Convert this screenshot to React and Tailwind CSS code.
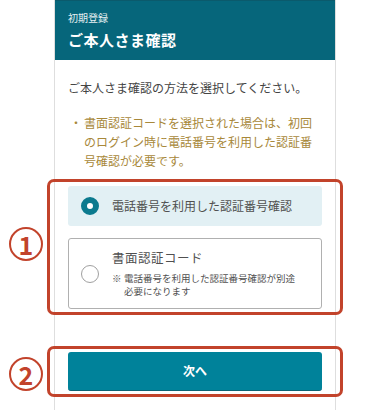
import React from 'react';

const Marker = ({ n, className }) => (
  <div
    className={`absolute left-[-41px] w-[34px] h-[34px] rounded-full border-[2px] border-[#c2432b] flex items-center justify-center text-[#c2432b] text-[25px] font-bold leading-none ${className}`}
  >
    {n}
  </div>
);

const App = () => {
  return (
    <div
      className="w-[390px] h-[410px] bg-white overflow-hidden"
      style={{ fontFamily: '"Noto Sans CJK JP", "Noto Sans", sans-serif' }}
    >
      <div className="ml-[54px] w-[282px] h-[410px] border-x border-[#dedede]">
        {/* header */}
        <div className="h-[60px] bg-[#06667b] px-[13px] pt-[10px] border-t border-[#0b5a6c]">
          <div className="text-[10px] leading-[14px] text-white/90">初期登録</div>
          <div className="mt-[4px] text-[15px] leading-[22px] font-bold text-white tracking-[0.5px]">ご本人さま確認</div>
        </div>

        <div className="px-[13px]">
          <p className="mt-[19px] text-[12px] leading-[18px] text-[#444]">
            ご本人さま確認の方法を選択してください。
          </p>

          <div className="mt-[16px] flex text-[12px] leading-[19px] text-[#a8883a]">
            <span className="w-[16px] shrink-0 text-center">・</span>
            <span>書面認証コードを選択された場合は、初回のログイン時に電話番号を利用した認証番号確認が必要です。</span>
          </div>

          {/* choice */}
          <div className="relative mt-[9px] mx-[-21px] border-[3px] border-[#c2432b] rounded-[7px] px-[18px] pt-[4px] pb-[3px]">
            <Marker n="1" className="top-[45px]" />
            <div className="h-[40px] rounded-[3px] bg-[#e2f0f4] flex items-center pl-[13px] gap-[13px]">
              <span className="w-[18px] h-[18px] rounded-full border-[6px] border-[#0b7a8e] bg-white shrink-0"></span>
              <span className="text-[12px] text-[#505050]">電話番号を利用した認証番号確認</span>
            </div>
            <div className="mt-[12px] h-[71px] rounded-[3px] border border-[#b0b0b0] flex items-center pl-[12px] gap-[13px]">
              <span className="w-[18px] h-[18px] rounded-full border border-[#a0a0a0] bg-white shrink-0"></span>
              <div>
                <div className="text-[12.5px] leading-[18px] text-[#505050] tracking-[0.5px]">書面認証コード</div>
                <div className="mt-[5px] flex text-[9.5px] leading-[13px] text-[#505050]">
                  <span className="w-[12px] shrink-0">※</span>
                  <span>電話番号を利用した認証番号確認が別途<br />必要になります</span>
                </div>
              </div>
            </div>
          </div>

          {/* next */}
          <div className="relative mt-[31px] mx-[-21px] border-[3px] border-[#c2432b] rounded-[7px] px-[18px] pt-[3px] pb-[3px]">
            <Marker n="2" className="top-[8px]" />
            <button className="w-full h-[39px] rounded-[3px] bg-[#00829a] border-b border-[#0a6576] text-white text-[12px] font-bold">
              次へ
            </button>
          </div>
        </div>
      </div>
    </div>
  );
};

export default App;
